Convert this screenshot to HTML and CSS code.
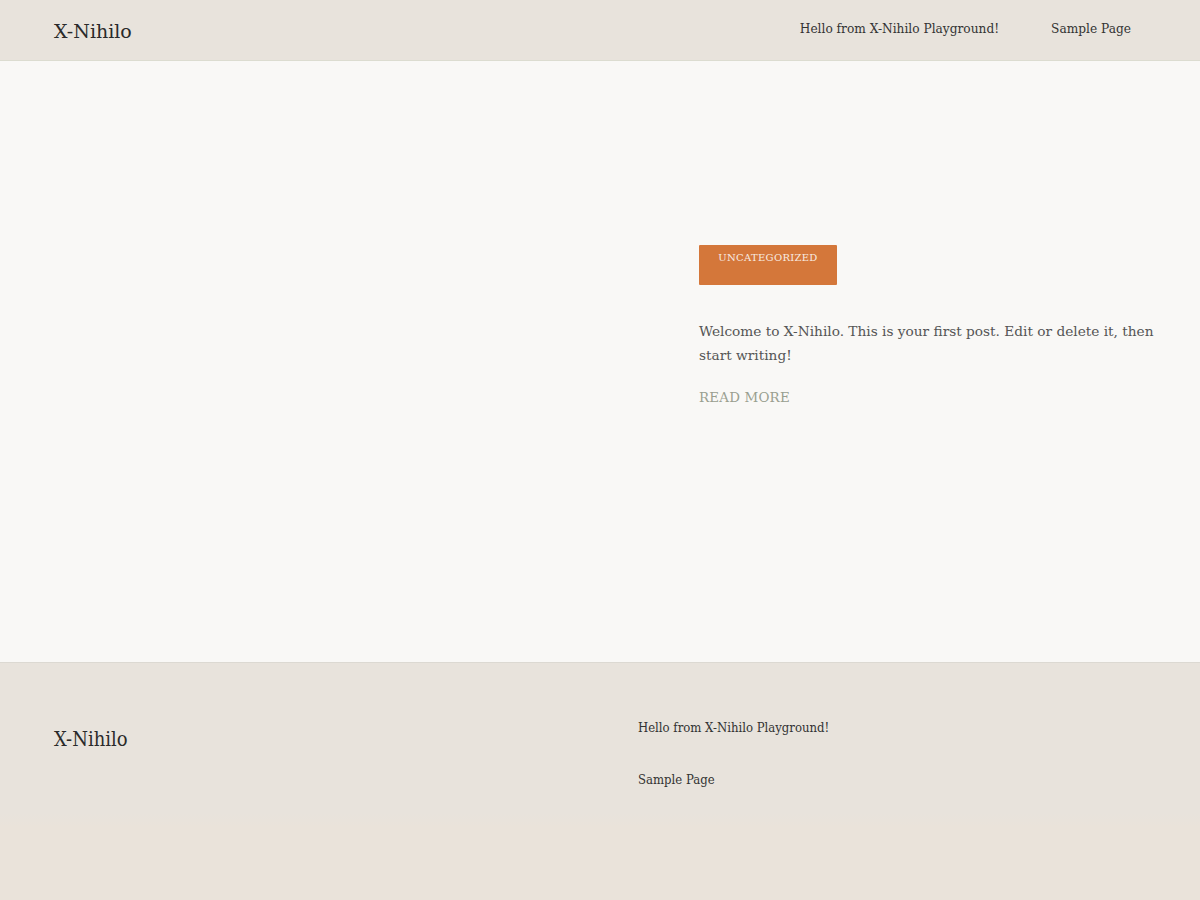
FILE: index.html
```html
<!DOCTYPE html>
<html lang="en">
<head>
<meta charset="utf-8">
<title>X-Nihilo</title>
<link rel="stylesheet" href="styles.css">
</head>
<body>
<header class="site-header">
  <a class="logo" href="#">X-Nihilo</a>
  <nav class="nav">
    <a href="#">Hello from X-Nihilo Playground!</a>
    <a href="#">Sample Page</a>
  </nav>
</header>
<main class="hero">
  <div class="hero-media"></div>
  <div class="hero-body">
    <a class="badge" href="#">UNCATEGORIZED</a>
    <p class="excerpt">Welcome to X-Nihilo. This is your first post. Edit or delete it, then start writing!</p>
    <a class="more" href="#">READ MORE</a>
  </div>
</main>
<footer class="site-footer">
  <div class="footer-logo">X-Nihilo</div>
  <ul class="footer-links">
    <li><a href="#">Hello from X-Nihilo Playground!</a></li>
    <li><a href="#">Sample Page</a></li>
  </ul>
</footer>
</body>
</html>
```
FILE: styles.css
```css
* { box-sizing: border-box; }
html, body { margin: 0; padding: 0; }
body {
  background: #eae3da;
  font-family: "DejaVu Serif", serif;
  color: #2b2b2b;
}
a { text-decoration: none; color: inherit; }

.site-header {
  height: 61px;
  background: #e8e3dc;
  border-bottom: 1px solid #dcdcd0;
  display: flex;
  align-items: center;
  justify-content: space-between;
  padding: 0 69px 0 54px;
}
.logo {
  font-size: 19px;
  color: #2a2a2a;
  margin-top: 2px;
}
.nav {
  display: flex;
  gap: 52px;
  margin-top: -3px;
}
.nav a {
  font-size: 12.2px;
  color: #333;
}

.hero {
  background: #f9f8f6;
  height: 602px;
  display: grid;
  grid-template-columns: 699px 1fr;
  border-bottom: 1px solid #dcd9d2;
}
.hero-body {
  padding-top: 184px;
  padding-right: 20px;
}
.badge {
  display: block;
  width: 138px;
  height: 40px;
  background: #d4773a;
  color: #f8ece2;
  font-size: 10px;
  letter-spacing: 0.3px;
  text-align: center;
  padding-top: 7px;
  border-radius: 1px;
}
.excerpt {
  margin: 34px 0 0;
  font-size: 13.7px;
  line-height: 24px;
  color: #555;
  max-width: 480px;
}
.more {
  display: inline-block;
  margin-top: 23px;
  font-size: 13.4px;
  color: #9a9f90;
  letter-spacing: 0.2px;
}

.site-footer {
  background: linear-gradient(#e8e3dc, #e8e3dc 150px, #eae3da 165px);
  height: 163px;
  display: grid;
  grid-template-columns: 584px 1fr;
  padding-left: 54px;
}
.footer-logo {
  font-family: "DejaVu Serif Condensed", "DejaVu Serif", serif;
  font-stretch: condensed;
  font-size: 20px;
  color: #2a2a2a;
  padding-top: 64px;
}
.footer-links {
  list-style: none;
  margin: 0;
  padding: 57px 0 0;
  font-family: "DejaVu Serif Condensed", "DejaVu Serif", serif;
  font-stretch: condensed;
  font-size: 13px;
  color: #333;
}
.footer-links li { height: 52px; }
```
